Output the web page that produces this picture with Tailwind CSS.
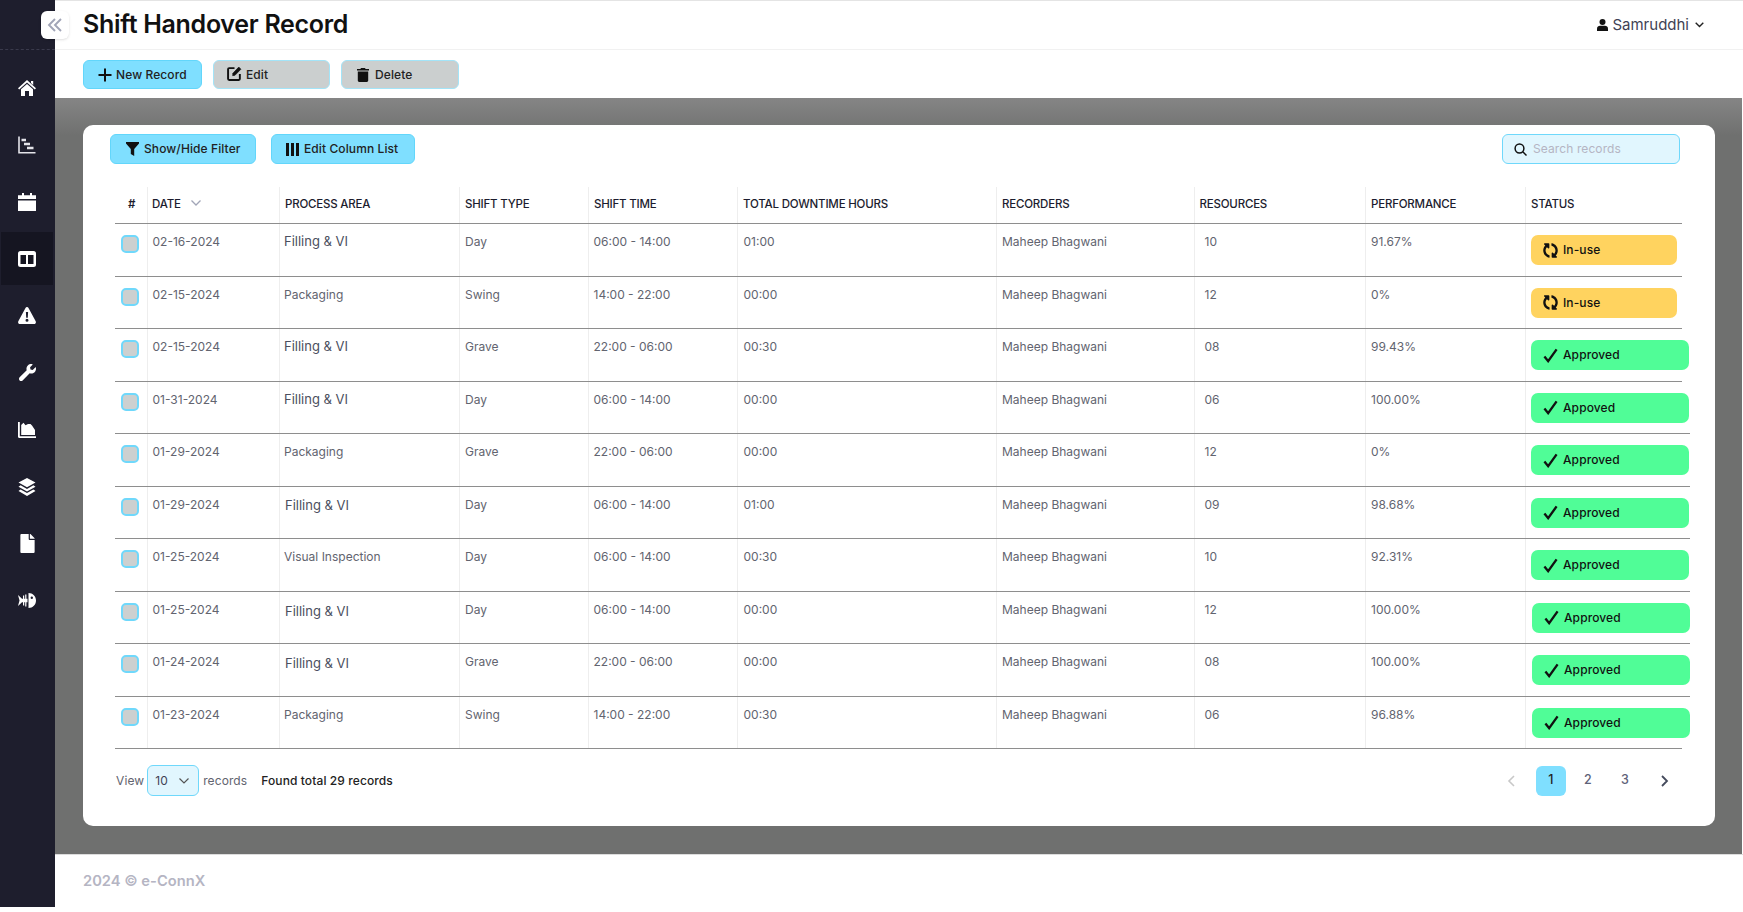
<!DOCTYPE html>
<html lang="en">

<head>
  <meta charset="UTF-8" />
  <title>Shift Handover Record</title>
  <script src="https://cdn.jsdelivr.net/npm/@tailwindcss/browser@4"></script>
</head>

<body class="w-[1743px] h-[912px] overflow-hidden bg-white font-['Inter',sans-serif]">
  <!-- shared icons -->
  <svg class="hidden">
    <symbol id="check" viewBox="0 0 16 16"><path d="M1.5 9 L5.5 14 L14.5 1.5" fill="none" stroke="currentColor" stroke-width="2.5" /></symbol>
    <symbol id="sync" viewBox="0 0 512 512"><path fill="currentColor" d="M370.72 133.28C339.458 104.008 298.888 87.962 255.848 88c-77.458.068-144.328 53.178-162.791 126.85-1.344 5.363-6.122 9.15-11.651 9.15H24.103c-7.498 0-13.194-6.807-11.807-14.176C33.933 94.924 134.813 8 256 8c66.448 0 126.791 26.136 171.315 68.685L463.03 40.97C478.149 25.851 504 36.559 504 57.941V192c0 13.255-10.745 24-24 24H345.941c-21.382 0-32.09-25.851-16.971-40.971l41.75-41.749zM32 296h134.059c21.382 0 32.09 25.851 16.971 40.971l-41.75 41.75c31.262 29.273 71.835 45.319 114.876 45.28 77.418-.07 144.315-53.144 162.787-126.849 1.344-5.363 6.122-9.15 11.651-9.15h57.304c7.498 0 13.194 6.807 11.807 14.176C478.067 417.076 377.187 504 256 504c-66.448 0-126.791-26.136-171.315-68.685L48.97 471.03C33.851 486.149 8 475.441 8 454.059V320c0-13.255 10.745-24 24-24z" /></symbol>
  </svg>

  <div class="flex h-[907px]">
    <!-- Sidebar -->
    <aside class="w-[55px] shrink-0 bg-[#1e1e2d] relative">
      <div class="h-[50px] border-b border-dashed border-[#3a3a4c]"></div>
      <button class="absolute left-[41px] top-[11px] w-[28px] h-[28px] rounded-[6px] bg-white flex items-center justify-center shadow-sm">
        <svg class="w-[16px] h-[16px]" viewBox="0 0 16 16" fill="none" stroke="#a1a5b7" stroke-width="1.9"><path d="M8 2 L2 8 L8 14 M14 2 L8 8 L14 14" /></svg>
      </button>
      <nav class="w-[54px] flex flex-col gap-[4px] mt-[11px] text-white">
        <a class="h-[53px] flex items-center justify-center">
          <svg class="w-[18px] h-[18px]" viewBox="0 0 18 18" fill="currentColor"><path d="M9 1 L18 9.2 L16.8 10.5 L9 3.6 L1.2 10.5 L0 9.2 Z M13 2 H15.2 V6 L13 4 Z M3 10.3 L9 5 L15 10.3 V17 H11 V12 H7 V17 H3 Z" /></svg>
        </a>
        <a class="h-[53px] flex items-center justify-center">
          <svg class="w-[18px] h-[18px]" viewBox="0 0 18 18" fill="none" stroke="#e4e4ea"><path d="M1 0.5 V16.7 H17.5" stroke-width="1.6" /><path d="M3.5 4 H8 M6 8 H12 M9 12 H15.5" stroke-width="2.4" /></svg>
        </a>
        <a class="h-[53px] flex items-center justify-center">
          <svg class="w-[18px] h-[18px]" viewBox="0 0 18 18" fill="currentColor"><path d="M4 0 H6 V2.2 H12 V0 H14 V2.2 H18 V6 H0 V2.2 H4 Z M0 7.4 H18 V18 H0 Z" /></svg>
        </a>
        <a class="h-[53px] w-[52px] ml-px bg-[#151521] flex items-center justify-center">
          <svg class="w-[18px] h-[16px]" viewBox="0 0 18 16"><rect width="18" height="16" rx="2.5" fill="white" /><rect x="2.5" y="4" width="5.5" height="9" fill="#151521" /><rect x="10" y="4" width="5.5" height="9" fill="#151521" /></svg>
        </a>
        <a class="h-[53px] flex items-center justify-center">
          <svg class="w-[18px] h-[17px]" viewBox="0 0 18 17" fill="currentColor"><path fill-rule="evenodd" d="M9 0 C9.7 0 10.2 .4 10.5 1 L17.7 14.3 C18.3 15.5 17.5 17 16.2 17 H1.8 C.5 17 -.3 15.5 .3 14.3 L7.5 1 C7.8 .4 8.3 0 9 0 Z M7.9 5 L8.2 10.8 H9.8 L10.1 5 Z M9 11.8 A1.5 1.5 0 1 0 9 14.8 A1.5 1.5 0 1 0 9 11.8 Z" /></svg>
        </a>
        <a class="h-[53px] flex items-center justify-center">
          <svg class="w-[17px] h-[17px]" viewBox="0 0 512 512" fill="currentColor"><path d="M507.73 109.1c-2.24-9.03-13.54-12.09-20.12-5.51l-74.36 74.36-67.88-11.31-11.31-67.88 74.36-74.36c6.62-6.62 3.43-17.9-5.66-20.16-47.38-11.74-99.55.91-136.58 37.93-39.64 39.64-50.55 97.1-34.05 147.2L18.74 402.76c-24.99 24.99-24.99 65.51 0 90.5 24.99 24.99 65.51 24.99 90.5 0l213.21-213.21c50.12 16.71 107.47 5.68 147.37-34.22 37.07-37.07 49.7-89.32 37.91-136.73z" /></svg>
        </a>
        <a class="h-[53px] flex items-center justify-center">
          <svg class="w-[18px] h-[16px]" viewBox="0 0 18 16" fill="currentColor"><path d="M0 0 H1.8 V14.2 H18 V16 H1.2 C.5 16 0 15.5 0 14.8 Z" /><path d="M3.2 13 V3 L5.5 .8 L7.5 3.2 L10 2 L12.5 2 L14 3.4 L17 8 V13 Z" /></svg>
        </a>
        <a class="h-[53px] flex items-center justify-center">
          <svg class="w-[18px] h-[18px]" viewBox="0 0 18 18" fill="currentColor"><path d="M9 0 L17.5 4.6 L9 9.2 L.5 4.6 Z M2.6 7.3 L9 10.9 L15.4 7.3 L17.5 8.8 L9 13.4 L.5 8.8 Z M2.6 11.6 L9 15.1 L15.4 11.6 L17.5 13.1 L9 18 L.5 13.1 Z" /></svg>
        </a>
        <a class="h-[53px] flex items-center justify-center">
          <svg class="w-[15px] h-[19px]" viewBox="0 0 384 512" fill="currentColor"><path d="M224 136V0H24C10.7 0 0 10.7 0 24v464c0 13.3 10.7 24 24 24h336c13.3 0 24-10.7 24-24V160H248c-13.2 0-24-10.8-24-24zm160-14.1v6.1H256V0h6.1c6.4 0 12.5 2.5 17 7l97.9 98c4.5 4.5 7 10.6 7 16.9z" /></svg>
        </a>
        <a class="h-[53px] flex items-center justify-center">
          <svg class="w-[18px] h-[15px]" viewBox="0 0 18 15" fill="currentColor"><path fill-rule="evenodd" d="M10.5 0 C14.8 0 18 3.3 18 7.5 C18 11.7 14.8 15 10.5 15 Z M13.8 3.6 A1.2 1.2 0 1 0 13.8 6 A1.2 1.2 0 1 0 13.8 3.6 Z" /><path d="M0 2 L4 5.8 H5 V2.5 H6.2 V5.8 H7.2 V1.5 H8.4 V5.8 H9.5 V9.2 H8.4 V13.5 H7.2 V9.2 H6.2 V12.5 H5 V9.2 H4 L0 13 L1.5 7.5 Z" /></svg>
        </a>
      </nav>
    </aside>

    <!-- Main -->
    <main class="flex-1 flex flex-col min-w-0">
      <header class="h-[50px] shrink-0 border-t border-b border-t-[#e4e4e4] border-b-[#f1f1f1] pl-[28px] pr-[39px] flex items-center justify-between">
        <h1 class="text-[25px] font-semibold text-[#111] tracking-[-0.3px]">Shift Handover Record</h1>
        <div class="flex items-center text-[15px] text-[#3f4254]">
          <svg class="w-[11px] h-[12px] mr-[4px]" viewBox="0 0 11 12" fill="#111"><circle cx="5.5" cy="3" r="3" /><path d="M0 12 V9.5 C0 7.8 1.5 6.8 3 6.8 H8 C9.5 6.8 11 7.8 11 9.5 V12 Z" /></svg>
          <span>Samruddhi</span>
          <svg class="w-[9px] h-[6px] ml-[6px]" viewBox="0 0 9 6" fill="none" stroke="#222" stroke-width="1.4"><path d="M.7 .8 L4.5 4.6 L8.3 .8" /></svg>
        </div>
      </header>

      <!-- Toolbar -->
      <div class="h-[48px] shrink-0 pl-[28px] pt-[10px] flex items-start gap-[11px] text-[12px] tracking-[.1px] font-medium text-[#222]">
        <button class="w-[119px] h-[29px] rounded-[6px] bg-[#7fdfff] border border-[#62d6fb] pl-[14px] flex items-center">
          <svg class="w-[14px] h-[14px] mr-[4px]" viewBox="0 0 14 14" fill="none" stroke="#111" stroke-width="2"><path d="M7 .5 V13.5 M.5 7 H13.5" /></svg>New Record
        </button>
        <button class="w-[117px] h-[29px] rounded-[6px] bg-[#cbcfcf] border border-[#a3e4f8] pl-[13px] flex items-center">
          <svg class="w-[15px] h-[15px] mr-[4px] mt-[-2px]" viewBox="0 0 14 14" fill="none" stroke="#111" stroke-width="1.8"><path d="M7 2 H2 C1.3 2 1 2.3 1 3 V12 C1 12.7 1.3 13 2 13 H11 C11.7 13 12 12.7 12 12 V7.5" /><path d="M5.5 6.8 L11 1 L13 3 L7.5 8.6 L5.3 9 Z" fill="#111" stroke-width=".6" /></svg>Edit
        </button>
        <button class="w-[118px] h-[29px] rounded-[6px] bg-[#cbcfcf] border border-[#a3e4f8] pl-[15px] flex items-center">
          <svg class="w-[12px] h-[14px] mr-[6px]" viewBox="0 0 12 14" fill="#111"><path d="M4 0 H8 L8.6 1 H12 V2.6 H0 V1 H3.4 Z M.8 3.6 H11.2 V12.6 C11.2 13.4 10.6 14 9.8 14 H2.2 C1.4 14 .8 13.4 .8 12.6 Z" /></svg>Delete
        </button>
      </div>

      <!-- Content -->
      <section class="flex-1 mr-px pl-[28px] pr-[27px] pt-[27px] bg-linear-to-b from-[#858585] to-[#6f706f] to-[5%]">
        <div class="w-[1632px] h-[701px] bg-white rounded-[10px] pl-[32px] pt-[9px]">
          <div class="flex items-start">
            <button class="w-[146px] h-[30px] ml-[-5px] rounded-[6px] bg-[#7fdfff] border border-[#62d6fb] pl-[15px] flex items-center text-[12px] tracking-[.1px] font-medium text-[#222]">
              <svg class="w-[13px] h-[14px] mr-[5px]" viewBox="0 0 13 14" fill="#111"><path d="M0 0 H13 V1.6 L8.2 7 V14 L4.8 12 V7 L0 1.6 Z" /></svg>Show/Hide Filter
            </button>
            <button class="w-[144px] h-[30px] ml-[15px] rounded-[6px] bg-[#7fdfff] border border-[#62d6fb] pl-[14px] flex items-center text-[12px] tracking-[.1px] font-medium text-[#222]">
              <svg class="w-[13px] h-[13px] mr-[5px]" viewBox="0 0 13 13" fill="#111"><path d="M0 0 H3 V13 H0 Z M5 0 H8 V13 H5 Z M10 0 H13 V13 H10 Z" /></svg>Edit Column List
            </button>
            <div class="ml-auto mr-[35px] w-[178px] h-[30px] rounded-[6px] bg-[#e1f6fe] border-[1.5px] border-[#6fd8fb] flex items-center pl-[11px]">
              <svg class="w-[13px] h-[13px] mr-[6px]" viewBox="0 0 13 13" fill="none" stroke="#111" stroke-width="1.5"><circle cx="5.5" cy="5.5" r="4.4" /><path d="M8.8 8.8 L12.5 12.5" /></svg>
              <input type="text" placeholder="Search records" class="w-[130px] bg-transparent outline-none text-[12px] tracking-[.1px] placeholder:text-[#b5b5c3]" />
            </div>
          </div>

          <!-- Table -->
          <div class="mt-[23px] text-[12px] text-[#62646f]">
            <div class="grid grid-cols-[32px_132px_180px_129px_149px_259px_197.5px_171.5px_160px_157px] w-[1567px] h-[37px] border-b border-[#8e8e8e] items-stretch font-medium text-[11.5px] text-[#1c1c2e] tracking-[-0.2px]">
              <div class="pl-[13px] pt-[9px] font-semibold">#</div>
              <div class="border-l border-[#eee] pl-[4px] pt-[9px] flex items-start">DATE
                <svg class="w-[10px] h-[6px] ml-[10px] mt-[4px]" viewBox="0 0 10 6" fill="none" stroke="#a1a5b7" stroke-width="1.3"><path d="M.5 .5 L5 5 L9.5 .5" /></svg>
              </div>
              <div class="border-l border-[#eee] pl-[5px] pt-[9px]">PROCESS AREA</div>
              <div class="border-l border-[#eee] pl-[5px] pt-[9px]">SHIFT TYPE</div>
              <div class="border-l border-[#eee] pl-[5px] pt-[9px]">SHIFT TIME</div>
              <div class="border-l border-[#eee] pl-[5px] pt-[9px]">TOTAL DOWNTIME HOURS</div>
              <div class="border-l border-[#eee] pl-[5px] pt-[9px]">RECORDERS</div>
              <div class="border-l border-[#eee] pl-[5px] pt-[9px]">RESOURCES</div>
              <div class="border-l border-[#eee] pl-[5px] pt-[9px]">PERFORMANCE</div>
              <div class="border-l border-[#eee] pl-[5px] pt-[9px]">STATUS</div>
            </div>

            <div class="grid grid-cols-[32px_132px_180px_129px_149px_259px_197.5px_171.5px_160px_157px] w-[1567px] h-[52.5px] border-b border-[#8e8e8e]">
              <div class="pl-[6px] pt-[11px]"><input type="checkbox" class="appearance-none block w-[18px] h-[18px] rounded-[5px] bg-[#ccd0d0] border-2 border-[#6fd8fb]" /></div>
              <div class="border-l border-[#eee] pl-[4.5px] pt-[8px] leading-[20px]">02-16-2024</div>
              <div class="border-l border-[#eee] pl-[4px] pt-[7px] leading-[20px] text-[13px] text-[#4b4f60]">Filling &amp; VI</div>
              <div class="border-l border-[#eee] pl-[5px] pt-[8px] leading-[20px]">Day</div>
              <div class="border-l border-[#eee] pl-[4.5px] pt-[8px] leading-[20px]">06:00 - 14:00</div>
              <div class="border-l border-[#eee] pl-[5.5px] pt-[8px] leading-[20px]">01:00</div>
              <div class="border-l border-[#eee] pl-[5px] pt-[8px] leading-[20px]">Maheep Bhagwani</div>
              <div class="border-l border-[#eee] pl-[10px] pt-[8px] leading-[20px]">10</div>
              <div class="border-l border-[#eee] pl-[5px] pt-[8px] leading-[20px]">91.67%</div>
              <div class="border-l border-[#eee] pl-[5px] pt-[11px]"><div class="w-[146px] h-[30px] rounded-[7px] bg-[#ffd35f] pl-[12px] flex items-center font-medium text-[12px] tracking-[.1px] text-[#111]"><svg class="w-[15px] h-[15px] mr-[5px] rotate-90"><use href="#sync" /></svg>In-use</div></div>
            </div>
            <div class="grid grid-cols-[32px_132px_180px_129px_149px_259px_197.5px_171.5px_160px_157px] w-[1567px] h-[52.5px] border-b border-[#8e8e8e]">
              <div class="pl-[6px] pt-[11px]"><input type="checkbox" class="appearance-none block w-[18px] h-[18px] rounded-[5px] bg-[#ccd0d0] border-2 border-[#6fd8fb]" /></div>
              <div class="border-l border-[#eee] pl-[4.5px] pt-[8px] leading-[20px]">02-15-2024</div>
              <div class="border-l border-[#eee] pl-[4px] pt-[8px] leading-[20px]">Packaging</div>
              <div class="border-l border-[#eee] pl-[5px] pt-[8px] leading-[20px]">Swing</div>
              <div class="border-l border-[#eee] pl-[4.5px] pt-[8px] leading-[20px]">14:00 - 22:00</div>
              <div class="border-l border-[#eee] pl-[5.5px] pt-[8px] leading-[20px]">00:00</div>
              <div class="border-l border-[#eee] pl-[5px] pt-[8px] leading-[20px]">Maheep Bhagwani</div>
              <div class="border-l border-[#eee] pl-[10px] pt-[8px] leading-[20px]">12</div>
              <div class="border-l border-[#eee] pl-[5px] pt-[8px] leading-[20px]">0%</div>
              <div class="border-l border-[#eee] pl-[5px] pt-[11px]"><div class="w-[146px] h-[30px] rounded-[7px] bg-[#ffd35f] pl-[12px] flex items-center font-medium text-[12px] tracking-[.1px] text-[#111]"><svg class="w-[15px] h-[15px] mr-[5px] rotate-90"><use href="#sync" /></svg>In-use</div></div>
            </div>
            <div class="grid grid-cols-[32px_132px_180px_129px_149px_259px_197.5px_171.5px_160px_157px] w-[1567px] h-[52.5px] border-b border-[#8e8e8e]">
              <div class="pl-[6px] pt-[11px]"><input type="checkbox" class="appearance-none block w-[18px] h-[18px] rounded-[5px] bg-[#ccd0d0] border-2 border-[#6fd8fb]" /></div>
              <div class="border-l border-[#eee] pl-[4.5px] pt-[8px] leading-[20px]">02-15-2024</div>
              <div class="border-l border-[#eee] pl-[4px] pt-[7px] leading-[20px] text-[13px] text-[#4b4f60]">Filling &amp; VI</div>
              <div class="border-l border-[#eee] pl-[5px] pt-[8px] leading-[20px]">Grave</div>
              <div class="border-l border-[#eee] pl-[4.5px] pt-[8px] leading-[20px]">22:00 - 06:00</div>
              <div class="border-l border-[#eee] pl-[5.5px] pt-[8px] leading-[20px]">00:30</div>
              <div class="border-l border-[#eee] pl-[5px] pt-[8px] leading-[20px]">Maheep Bhagwani</div>
              <div class="border-l border-[#eee] pl-[10px] pt-[8px] leading-[20px]">08</div>
              <div class="border-l border-[#eee] pl-[5px] pt-[8px] leading-[20px]">99.43%</div>
              <div class="border-l border-[#eee] pl-[5px] pt-[11px]"><div class="w-[158px] h-[30px] rounded-[7px] bg-[#50fd97] pl-[12px] flex items-center font-medium text-[12px] tracking-[.1px] text-[#111]"><svg class="w-[15px] h-[15px] mr-[5px]"><use href="#check" /></svg>Approved</div></div>
            </div>
            <div class="grid grid-cols-[32px_132px_180px_129px_149px_259px_197.5px_171.5px_160px_157px] w-[1575px] h-[52.5px] border-b border-[#8e8e8e]">
              <div class="pl-[6px] pt-[11px]"><input type="checkbox" class="appearance-none block w-[18px] h-[18px] rounded-[5px] bg-[#ccd0d0] border-2 border-[#6fd8fb]" /></div>
              <div class="border-l border-[#eee] pl-[4.5px] pt-[8px] leading-[20px]">01-31-2024</div>
              <div class="border-l border-[#eee] pl-[4px] pt-[7px] leading-[20px] text-[13px] text-[#4b4f60]">Filling &amp; VI</div>
              <div class="border-l border-[#eee] pl-[5px] pt-[8px] leading-[20px]">Day</div>
              <div class="border-l border-[#eee] pl-[4.5px] pt-[8px] leading-[20px]">06:00 - 14:00</div>
              <div class="border-l border-[#eee] pl-[5.5px] pt-[8px] leading-[20px]">00:00</div>
              <div class="border-l border-[#eee] pl-[5px] pt-[8px] leading-[20px]">Maheep Bhagwani</div>
              <div class="border-l border-[#eee] pl-[10px] pt-[8px] leading-[20px]">06</div>
              <div class="border-l border-[#eee] pl-[5px] pt-[8px] leading-[20px]">100.00%</div>
              <div class="border-l border-[#eee] pl-[5px] pt-[11px]"><div class="w-[158px] h-[30px] rounded-[7px] bg-[#50fd97] pl-[12px] flex items-center font-medium text-[12px] tracking-[.1px] text-[#111]"><svg class="w-[15px] h-[15px] mr-[5px]"><use href="#check" /></svg>Appoved</div></div>
            </div>
            <div class="grid grid-cols-[32px_132px_180px_129px_149px_259px_197.5px_171.5px_160px_157px] w-[1575px] h-[52.5px] border-b border-[#8e8e8e]">
              <div class="pl-[6px] pt-[11px]"><input type="checkbox" class="appearance-none block w-[18px] h-[18px] rounded-[5px] bg-[#ccd0d0] border-2 border-[#6fd8fb]" /></div>
              <div class="border-l border-[#eee] pl-[4.5px] pt-[8px] leading-[20px]">01-29-2024</div>
              <div class="border-l border-[#eee] pl-[4px] pt-[8px] leading-[20px]">Packaging</div>
              <div class="border-l border-[#eee] pl-[5px] pt-[8px] leading-[20px]">Grave</div>
              <div class="border-l border-[#eee] pl-[4.5px] pt-[8px] leading-[20px]">22:00 - 06:00</div>
              <div class="border-l border-[#eee] pl-[5.5px] pt-[8px] leading-[20px]">00:00</div>
              <div class="border-l border-[#eee] pl-[5px] pt-[8px] leading-[20px]">Maheep Bhagwani</div>
              <div class="border-l border-[#eee] pl-[10px] pt-[8px] leading-[20px]">12</div>
              <div class="border-l border-[#eee] pl-[5px] pt-[8px] leading-[20px]">0%</div>
              <div class="border-l border-[#eee] pl-[5px] pt-[11px]"><div class="w-[158px] h-[30px] rounded-[7px] bg-[#50fd97] pl-[12px] flex items-center font-medium text-[12px] tracking-[.1px] text-[#111]"><svg class="w-[15px] h-[15px] mr-[5px]"><use href="#check" /></svg>Approved</div></div>
            </div>
            <div class="grid grid-cols-[32px_132px_180px_129px_149px_259px_197.5px_171.5px_160px_157px] w-[1575px] h-[52.5px] border-b border-[#8e8e8e]">
              <div class="pl-[6px] pt-[11px]"><input type="checkbox" class="appearance-none block w-[18px] h-[18px] rounded-[5px] bg-[#ccd0d0] border-2 border-[#6fd8fb]" /></div>
              <div class="border-l border-[#eee] pl-[4.5px] pt-[8px] leading-[20px]">01-29-2024</div>
              <div class="border-l border-[#eee] pl-[5px] pt-[8px] leading-[20px] text-[13px] text-[#4b4f60]">Filling &amp; VI</div>
              <div class="border-l border-[#eee] pl-[5px] pt-[8px] leading-[20px]">Day</div>
              <div class="border-l border-[#eee] pl-[4.5px] pt-[8px] leading-[20px]">06:00 - 14:00</div>
              <div class="border-l border-[#eee] pl-[5.5px] pt-[8px] leading-[20px]">01:00</div>
              <div class="border-l border-[#eee] pl-[5px] pt-[8px] leading-[20px]">Maheep Bhagwani</div>
              <div class="border-l border-[#eee] pl-[10px] pt-[8px] leading-[20px]">09</div>
              <div class="border-l border-[#eee] pl-[5px] pt-[8px] leading-[20px]">98.68%</div>
              <div class="border-l border-[#eee] pl-[5px] pt-[11px]"><div class="w-[158px] h-[30px] rounded-[7px] bg-[#50fd97] pl-[12px] flex items-center font-medium text-[12px] tracking-[.1px] text-[#111]"><svg class="w-[15px] h-[15px] mr-[5px]"><use href="#check" /></svg>Approved</div></div>
            </div>
            <div class="grid grid-cols-[32px_132px_180px_129px_149px_259px_197.5px_171.5px_160px_157px] w-[1575px] h-[52.5px] border-b border-[#8e8e8e]">
              <div class="pl-[6px] pt-[11px]"><input type="checkbox" class="appearance-none block w-[18px] h-[18px] rounded-[5px] bg-[#ccd0d0] border-2 border-[#6fd8fb]" /></div>
              <div class="border-l border-[#eee] pl-[4.5px] pt-[8px] leading-[20px]">01-25-2024</div>
              <div class="border-l border-[#eee] pl-[4px] pt-[8px] leading-[20px]">Visual Inspection</div>
              <div class="border-l border-[#eee] pl-[5px] pt-[8px] leading-[20px]">Day</div>
              <div class="border-l border-[#eee] pl-[4.5px] pt-[8px] leading-[20px]">06:00 - 14:00</div>
              <div class="border-l border-[#eee] pl-[5.5px] pt-[8px] leading-[20px]">00:30</div>
              <div class="border-l border-[#eee] pl-[5px] pt-[8px] leading-[20px]">Maheep Bhagwani</div>
              <div class="border-l border-[#eee] pl-[10px] pt-[8px] leading-[20px]">10</div>
              <div class="border-l border-[#eee] pl-[5px] pt-[8px] leading-[20px]">92.31%</div>
              <div class="border-l border-[#eee] pl-[5px] pt-[11px]"><div class="w-[158px] h-[30px] rounded-[7px] bg-[#50fd97] pl-[12px] flex items-center font-medium text-[12px] tracking-[.1px] text-[#111]"><svg class="w-[15px] h-[15px] mr-[5px]"><use href="#check" /></svg>Approved</div></div>
            </div>
            <div class="grid grid-cols-[32px_132px_180px_129px_149px_259px_197.5px_171.5px_160px_157px] w-[1575px] h-[52.5px] border-b border-[#8e8e8e]">
              <div class="pl-[6px] pt-[11px]"><input type="checkbox" class="appearance-none block w-[18px] h-[18px] rounded-[5px] bg-[#ccd0d0] border-2 border-[#6fd8fb]" /></div>
              <div class="border-l border-[#eee] pl-[4.5px] pt-[8px] leading-[20px]">01-25-2024</div>
              <div class="border-l border-[#eee] pl-[5px] pt-[9px] leading-[20px] text-[13px] text-[#4b4f60]">Filling &amp; VI</div>
              <div class="border-l border-[#eee] pl-[5px] pt-[8px] leading-[20px]">Day</div>
              <div class="border-l border-[#eee] pl-[4.5px] pt-[8px] leading-[20px]">06:00 - 14:00</div>
              <div class="border-l border-[#eee] pl-[5.5px] pt-[8px] leading-[20px]">00:00</div>
              <div class="border-l border-[#eee] pl-[5px] pt-[8px] leading-[20px]">Maheep Bhagwani</div>
              <div class="border-l border-[#eee] pl-[10px] pt-[8px] leading-[20px]">12</div>
              <div class="border-l border-[#eee] pl-[5px] pt-[8px] leading-[20px]">100.00%</div>
              <div class="border-l border-[#eee] pl-[6px] pt-[11px]"><div class="w-[158px] h-[30px] rounded-[7px] bg-[#50fd97] pl-[12px] flex items-center font-medium text-[12px] tracking-[.1px] text-[#111]"><svg class="w-[15px] h-[15px] mr-[5px]"><use href="#check" /></svg>Approved</div></div>
            </div>
            <div class="grid grid-cols-[32px_132px_180px_129px_149px_259px_197.5px_171.5px_160px_157px] w-[1575px] h-[52.5px] border-b border-[#8e8e8e]">
              <div class="pl-[6px] pt-[11px]"><input type="checkbox" class="appearance-none block w-[18px] h-[18px] rounded-[5px] bg-[#ccd0d0] border-2 border-[#6fd8fb]" /></div>
              <div class="border-l border-[#eee] pl-[4.5px] pt-[8px] leading-[20px]">01-24-2024</div>
              <div class="border-l border-[#eee] pl-[5px] pt-[9px] leading-[20px] text-[13px] text-[#4b4f60]">Filling &amp; VI</div>
              <div class="border-l border-[#eee] pl-[5px] pt-[8px] leading-[20px]">Grave</div>
              <div class="border-l border-[#eee] pl-[4.5px] pt-[8px] leading-[20px]">22:00 - 06:00</div>
              <div class="border-l border-[#eee] pl-[5.5px] pt-[8px] leading-[20px]">00:00</div>
              <div class="border-l border-[#eee] pl-[5px] pt-[8px] leading-[20px]">Maheep Bhagwani</div>
              <div class="border-l border-[#eee] pl-[10px] pt-[8px] leading-[20px]">08</div>
              <div class="border-l border-[#eee] pl-[5px] pt-[8px] leading-[20px]">100.00%</div>
              <div class="border-l border-[#eee] pl-[6px] pt-[11px]"><div class="w-[158px] h-[30px] rounded-[7px] bg-[#50fd97] pl-[12px] flex items-center font-medium text-[12px] tracking-[.1px] text-[#111]"><svg class="w-[15px] h-[15px] mr-[5px]"><use href="#check" /></svg>Approved</div></div>
            </div>
            <div class="grid grid-cols-[32px_132px_180px_129px_149px_259px_197.5px_171.5px_160px_157px] w-[1567px] h-[52.5px] border-b border-[#8e8e8e]">
              <div class="pl-[6px] pt-[11px]"><input type="checkbox" class="appearance-none block w-[18px] h-[18px] rounded-[5px] bg-[#ccd0d0] border-2 border-[#6fd8fb]" /></div>
              <div class="border-l border-[#eee] pl-[4.5px] pt-[8px] leading-[20px]">01-23-2024</div>
              <div class="border-l border-[#eee] pl-[4px] pt-[8px] leading-[20px]">Packaging</div>
              <div class="border-l border-[#eee] pl-[5px] pt-[8px] leading-[20px]">Swing</div>
              <div class="border-l border-[#eee] pl-[4.5px] pt-[8px] leading-[20px]">14:00 - 22:00</div>
              <div class="border-l border-[#eee] pl-[5.5px] pt-[8px] leading-[20px]">00:30</div>
              <div class="border-l border-[#eee] pl-[5px] pt-[8px] leading-[20px]">Maheep Bhagwani</div>
              <div class="border-l border-[#eee] pl-[10px] pt-[8px] leading-[20px]">06</div>
              <div class="border-l border-[#eee] pl-[5px] pt-[8px] leading-[20px]">96.88%</div>
              <div class="border-l border-[#eee] pl-[6px] pt-[11px]"><div class="w-[158px] h-[30px] rounded-[7px] bg-[#50fd97] pl-[12px] flex items-center font-medium text-[12px] tracking-[.1px] text-[#111]"><svg class="w-[15px] h-[15px] mr-[5px]"><use href="#check" /></svg>Approved</div></div>
            </div>
          </div>

          <!-- Table footer -->
          <div class="mt-[16px] flex items-center text-[12px] tracking-[.1px] text-[#62646f] pr-[33px]">
            <span class="ml-px">View</span>
            <div class="w-[52px] h-[31px] ml-[3px] rounded-[6px] bg-[#e1f6fe] border-[1.5px] border-[#6fd8fb] pl-[7px] flex items-center justify-between pr-[9px] text-[#3f4254]">10
              <svg class="w-[10px] h-[6px]" viewBox="0 0 10 6" fill="none" stroke="#555" stroke-width="1.2"><path d="M.5 .5 L5 5 L9.5 .5" /></svg>
            </div>
            <span class="ml-[4px]">records</span>
            <span class="ml-[14px] font-medium text-[#222]">Found total 29 records</span>
            <div class="ml-auto flex items-center text-[#5e6278] text-[12.5px] font-medium">
              <svg class="w-[8px] h-[12px]" viewBox="0 0 8 12" fill="none" stroke="#c8c8c8" stroke-width="1.6"><path d="M7 1 L2 6 L7 11" /></svg>
              <span class="w-[30px] h-[30px] ml-[21px] rounded-[6px] bg-[#7fdfff] text-[#222] flex items-center justify-center">1</span>
              <span class="w-[30px] h-[30px] ml-[7px] flex items-center justify-center">2</span>
              <span class="w-[30px] h-[30px] ml-[7px] flex items-center justify-center">3</span>
              <svg class="w-[8px] h-[12px] ml-[21px] mr-[13px]" viewBox="0 0 8 12" fill="none" stroke="#444a5c" stroke-width="1.8"><path d="M1 1 L6 6 L1 11" /></svg>
            </div>
          </div>
        </div>
      </section>

      <footer class="h-[53px] shrink-0 border-t border-[#dcdcdc] pl-[28px] flex items-center text-[14.7px] font-semibold text-[#b5b5c3]">2024 © e-ConnX</footer>
    </main>
  </div>
</body>

</html>
